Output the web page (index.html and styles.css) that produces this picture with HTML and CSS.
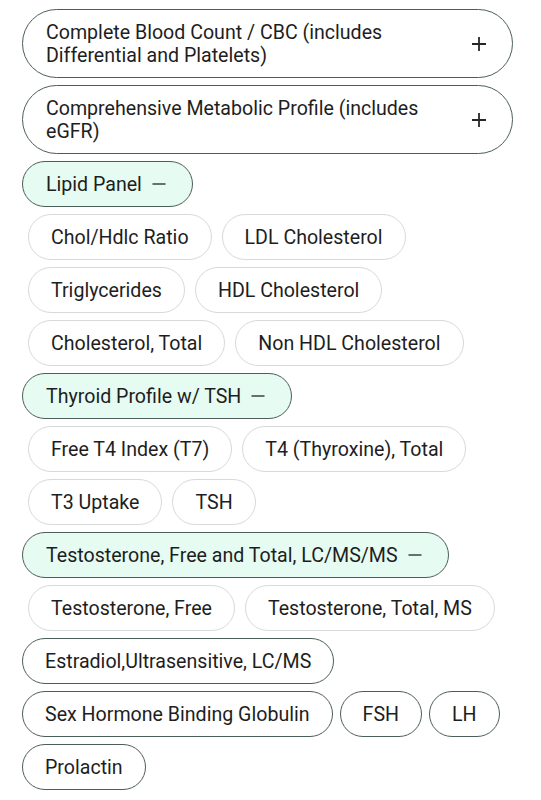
FILE: index.html
```html
<!DOCTYPE html>
<html>
<head>
<meta charset="utf-8">
<link rel="stylesheet" href="styles.css">
</head>
<body>
<div class="list">
  <div class="pill pill-tall">
    <span class="label">Complete Blood Count / CBC (includes Differential and Platelets)</span>
    <span class="icon"><svg width="18" height="18" viewBox="0 0 18 18"><path d="M9 2v14M2 9h14" stroke="#262626" stroke-width="1.8" fill="none"/></svg></span>
  </div>
  <div class="pill pill-tall">
    <span class="label">Comprehensive Metabolic Profile (includes eGFR)</span>
    <span class="icon"><svg width="18" height="18" viewBox="0 0 18 18"><path d="M9 2v14M2 9h14" stroke="#262626" stroke-width="1.8" fill="none"/></svg></span>
  </div>

  <div class="row"><div class="pill active"><span>Lipid Panel</span><span class="icon-sm"><svg width="18" height="18" viewBox="0 0 18 18"><path d="M2.5 9h13" stroke="#333" stroke-width="1.4" fill="none"/></svg></span></div></div>
  <div class="subs">
    <div class="chip">Chol/Hdlc Ratio</div>
    <div class="chip">LDL Cholesterol</div>
    <div class="chip">Triglycerides</div>
    <div class="chip">HDL Cholesterol</div>
    <div class="chip">Cholesterol, Total</div>
    <div class="chip">Non HDL Cholesterol</div>
  </div>

  <div class="row"><div class="pill active"><span>Thyroid Profile w/ TSH</span><span class="icon-sm"><svg width="18" height="18" viewBox="0 0 18 18"><path d="M2.5 9h13" stroke="#333" stroke-width="1.4" fill="none"/></svg></span></div></div>
  <div class="subs">
    <div class="chip">Free T4 Index (T7)</div>
    <div class="chip">T4 (Thyroxine), Total</div>
    <div class="chip">T3 Uptake</div>
    <div class="chip">TSH</div>
  </div>

  <div class="row"><div class="pill active"><span>Testosterone, Free and Total, LC/MS/MS</span><span class="icon-sm"><svg width="18" height="18" viewBox="0 0 18 18"><path d="M2.5 9h13" stroke="#333" stroke-width="1.4" fill="none"/></svg></span></div></div>
  <div class="subs">
    <div class="chip">Testosterone, Free</div>
    <div class="chip">Testosterone, Total, MS</div>
  </div>

  <div class="wrap">
    <div class="pill">Estradiol,Ultrasensitive, LC/MS</div>
    <div class="pill">Sex Hormone Binding Globulin</div>
    <div class="pill">FSH</div>
    <div class="pill">LH</div>
    <div class="pill">Prolactin</div>
  </div>
</div>
</body>
</html>
```

FILE: styles.css
```css
html, body {
  margin: 0;
  padding: 0;
  background: #ffffff;
}
body {
  font-family: Roboto, "Noto Sans", Arial, sans-serif;
  font-size: 19.6px;
  color: #1e1e1e;
}
.list {
  display: flex;
  flex-direction: column;
  gap: 7px;
  padding: 9px 28px 10px 22px;
}
.row {
  display: flex;
}
.pill {
  box-sizing: border-box;
  height: 46px;
  display: inline-flex;
  align-items: center;
  padding: 0 22px;
  border: 1.2px solid #4c5e59;
  border-radius: 40px;
  background: #ffffff;
  white-space: nowrap;
}
.pill.active {
  background: #e6fbf1;
  padding: 0 24px 0 23px;
}
.icon-sm {
  display: inline-flex;
  margin-left: 8px;
}
.pill-tall {
  height: 69px;
  width: 100%;
  justify-content: space-between;
  gap: 24px;
  padding: 0 24px 0 23px;
  white-space: normal;
  line-height: 23px;
}
.label {
  flex: 1;
}
.icon {
  display: inline-flex;
  flex: none;
}
.subs {
  display: flex;
  flex-wrap: wrap;
  gap: 7px 10px;
  padding-left: 6px;
}
.chip {
  box-sizing: border-box;
  height: 46px;
  display: inline-flex;
  align-items: center;
  padding: 0 22px;
  border: 1px solid #d6dad9;
  border-radius: 40px;
  white-space: nowrap;
}
.wrap {
  display: flex;
  flex-wrap: wrap;
  gap: 7px 7px;
}
```
